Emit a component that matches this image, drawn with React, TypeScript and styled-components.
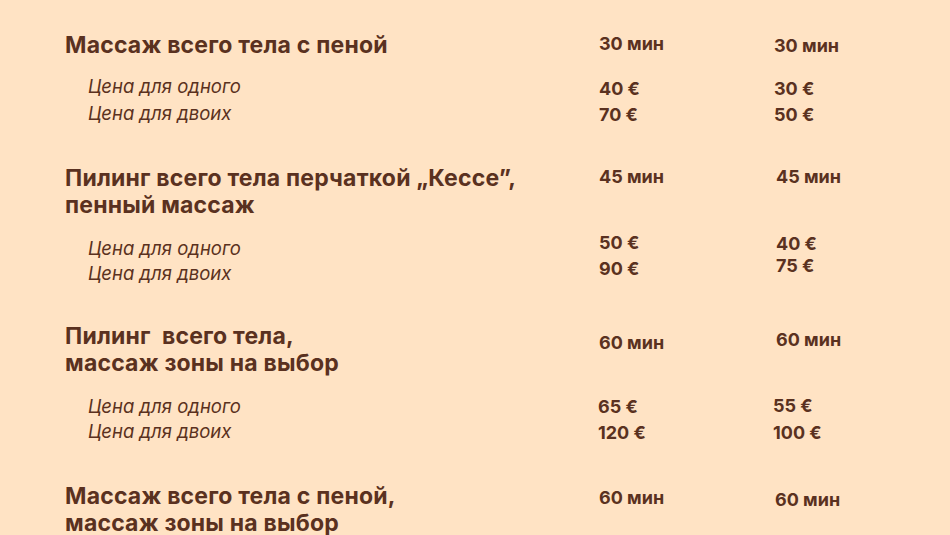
import React from "react";
import styled, { createGlobalStyle } from "styled-components";

const Global = createGlobalStyle`
  html, body { margin: 0; padding: 0; background: #FFE3C4; }
  body { font-family: "Inter", "Noto Sans", sans-serif; color: #5A3120; }
`;

const Page = styled.div`
  width: 950px;
  height: 535px;
  overflow: hidden;
  background: #FFE3C4;
  padding: 0 0 0 65px;
  box-sizing: border-box;
  display: flex;
  flex-direction: column;
`;

const Section = styled.section<{ $top: number }>`
  margin-top: ${(p) => p.$top}px;
  display: flex;
  flex-direction: column;
`;

const Row = styled.div<{ $top?: number }>`
  display: grid;
  grid-template-columns: 534px 175px 1fr;
  margin-top: ${(p) => p.$top ?? 0}px;
`;

const Title = styled.h2`
  margin: 0;
  font-size: 23px;
  line-height: 26.5px;
  font-weight: 700;
  letter-spacing: 0.2px;
  white-space: pre-wrap;
`;

const Duration = styled.div<{ $dy?: number; $dx?: number }>`
  font-size: 18px;
  line-height: 27px;
  font-weight: 700;
  transform: translate(${(p) => p.$dx ?? 0}px, ${(p) => p.$dy ?? 0}px);
`;

const Labels = styled.div`
  padding-left: 23px;
  display: flex;
  flex-direction: column;
`;

const Label = styled.div<{ $lh: number }>`
  font-size: 18.5px;
  line-height: ${(p) => p.$lh}px;
  font-style: italic;
  font-weight: 400;
`;

const Prices = styled.div<{ $dy?: number; $dx?: number }>`
  display: flex;
  flex-direction: column;
  transform: translate(${(p) => p.$dx ?? 0}px, ${(p) => p.$dy ?? 0}px);
`;

const Price = styled.div<{ $lh: number }>`
  font-size: 18px;
  line-height: ${(p) => p.$lh}px;
  font-weight: 700;
`;

type Col = { dur: string; p1: string; p2: string; dy?: number; pdy?: number; pdx?: number; dx?: number; plh?: number };
type Item = {
  title: string;
  top: number;
  gap: number;
  lh: number;
  cols: [Col, Col];
  prices?: boolean;
};

const items: Item[] = [
  {
    title: "Массаж всего тела с пеной",
    top: 32,
    gap: 14,
    lh: 27,
    cols: [
      { dur: "30 мин", p1: "40 €", p2: "70 €", dy: -2, pdy: 3, plh: 26 },
      { dur: "30 мин", p1: "30 €", p2: "50 €", dy: 0, pdy: 3, plh: 26 },
    ],
  },
  {
    title: "Пилинг всего тела перчаткой „Кессе”,\nпенный массаж",
    top: 38,
    gap: 18,
    lh: 25,
    cols: [
      { dur: "45 мин", p1: "50 €", p2: "90 €", dy: -2, pdy: -6, plh: 26 },
      { dur: "45 мин", p1: "40 €", p2: "75 €", dy: -2, pdy: -3, dx: 2, plh: 22 },
    ],
  },
  {
    title: "Пилинг  всего тела,\nмассаж зоны на выбор",
    top: 35,
    gap: 18,
    lh: 25,
    cols: [
      { dur: "60 мин", p1: "65 €", p2: "120 €", dy: 6, pdy: 0, dx: 0, pdx: -1, plh: 26 },
      { dur: "60 мин", p1: "55 €", p2: "100 €", dy: 3, pdy: -2, dx: 2, pdx: -1, plh: 27 },
    ],
  },
  {
    title: "Массаж всего тела с пеной,\nмассаж зоны на выбор",
    top: 35,
    gap: 0,
    lh: 25,
    prices: false,
    cols: [
      { dur: "60 мин", p1: "", p2: "", dy: 1 },
      { dur: "60 мин", p1: "", p2: "", dy: 3, dx: 1 },
    ],
  },
];

export default function App() {
  return (
    <>
      <Global />
      <Page>
        {items.map((it, i) => (
          <Section key={i} $top={it.top}>
            <Row>
              <Title>{it.title}</Title>
              {it.cols.map((c, j) => (
                <Duration key={j} $dy={c.dy} $dx={c.dx}>
                  {c.dur}
                </Duration>
              ))}
            </Row>
            {it.prices !== false && (
              <Row $top={it.gap}>
                <Labels>
                  <Label $lh={it.lh}>Цена для одного</Label>
                  <Label $lh={it.lh}>Цена для двоих</Label>
                </Labels>
                {it.cols.map((c, j) => (
                  <Prices key={j} $dy={c.pdy} $dx={c.pdx ?? c.dx}>
                    <Price $lh={c.plh ?? 26}>{c.p1}</Price>
                    <Price $lh={c.plh ?? 26}>{c.p2}</Price>
                  </Prices>
                ))}
              </Row>
            )}
          </Section>
        ))}
      </Page>
    </>
  );
}
